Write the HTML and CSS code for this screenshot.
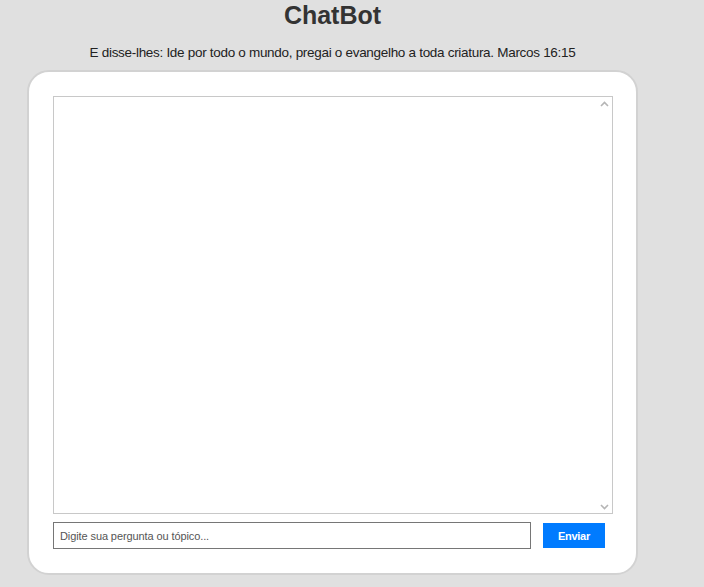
FILE: index.html
```html
<!DOCTYPE html>
<html lang="pt">
<head>
<meta charset="utf-8">
<title>ChatBot</title>
<link rel="stylesheet" href="styles.css">
</head>
<body>
<div class="wrap">
  <h1 class="title">ChatBot</h1>
  <p class="verse">E disse-lhes: Ide por todo o mundo, pregai o evangelho a toda criatura. Marcos 16:15</p>
  <div class="card">
    <div class="chat">
      <svg class="arrow up" width="9" height="6" viewBox="0 0 9 6"><path d="M1 5 L4.5 1.5 L8 5" fill="none" stroke="#b5b5b5" stroke-width="1.6"/></svg>
      <svg class="arrow down" width="9" height="6" viewBox="0 0 9 6"><path d="M1 1 L4.5 4.5 L8 1" fill="none" stroke="#b5b5b5" stroke-width="1.6"/></svg>
    </div>
    <div class="row">
      <input class="field" type="text" placeholder="Digite sua pergunta ou tópico...">
      <button class="send">Enviar</button>
    </div>
  </div>
</div>
</body>
</html>
```
FILE: styles.css
```css
html, body {
  margin: 0;
  padding: 0;
  background: #e0e0e0;
  font-family: "Liberation Sans", Arial, sans-serif;
  color: #333;
}
.wrap {
  width: 609px;
  margin-left: 28px;
}
.title {
  margin: 0;
  padding-top: 1px;
  font-size: 25px;
  line-height: 28px;
  text-align: center;
  font-weight: bold;
  color: #333;
}
.verse {
  margin: 16px 0 0 0;
  font-size: 13.5px;
  letter-spacing: -0.3px;
  line-height: 16px;
  text-align: center;
  color: #222;
}
.card {
  margin: 9px -1px 0 -1px;
  background: #fff;
  border: 2px solid #d2d2d2;
  border-radius: 22px;
  padding: 24px 23px 24px 24px;
}
.chat {
  position: relative;
  height: 416px;
  border: 1px solid #c8c8c8;
  background: #fff;
}
.arrow {
  position: absolute;
  right: 3px;
}
.arrow.up { top: 4px; }
.arrow.down { bottom: 3px; }
.row {
  display: flex;
  align-items: flex-start;
  gap: 12px;
  margin-top: 8px;
}
.field {
  box-sizing: border-box;
  width: 478px;
  height: 27px;
  margin: 0;
  border: 1px solid #767676;
  padding: 0 6px;
  font-family: "Liberation Sans", Arial, sans-serif;
  font-size: 11px;
  letter-spacing: -0.1px;
  color: #333;
  outline: none;
}
.field::placeholder {
  color: #555;
}
.send {
  box-sizing: border-box;
  width: 62px;
  height: 25px;
  margin-top: 1px;
  border: none;
  background: #007bff;
  color: #fff;
  font-family: "Liberation Sans", Arial, sans-serif;
  font-size: 11px;
  letter-spacing: -0.3px;
  font-weight: bold;
  padding: 0;
}
```
